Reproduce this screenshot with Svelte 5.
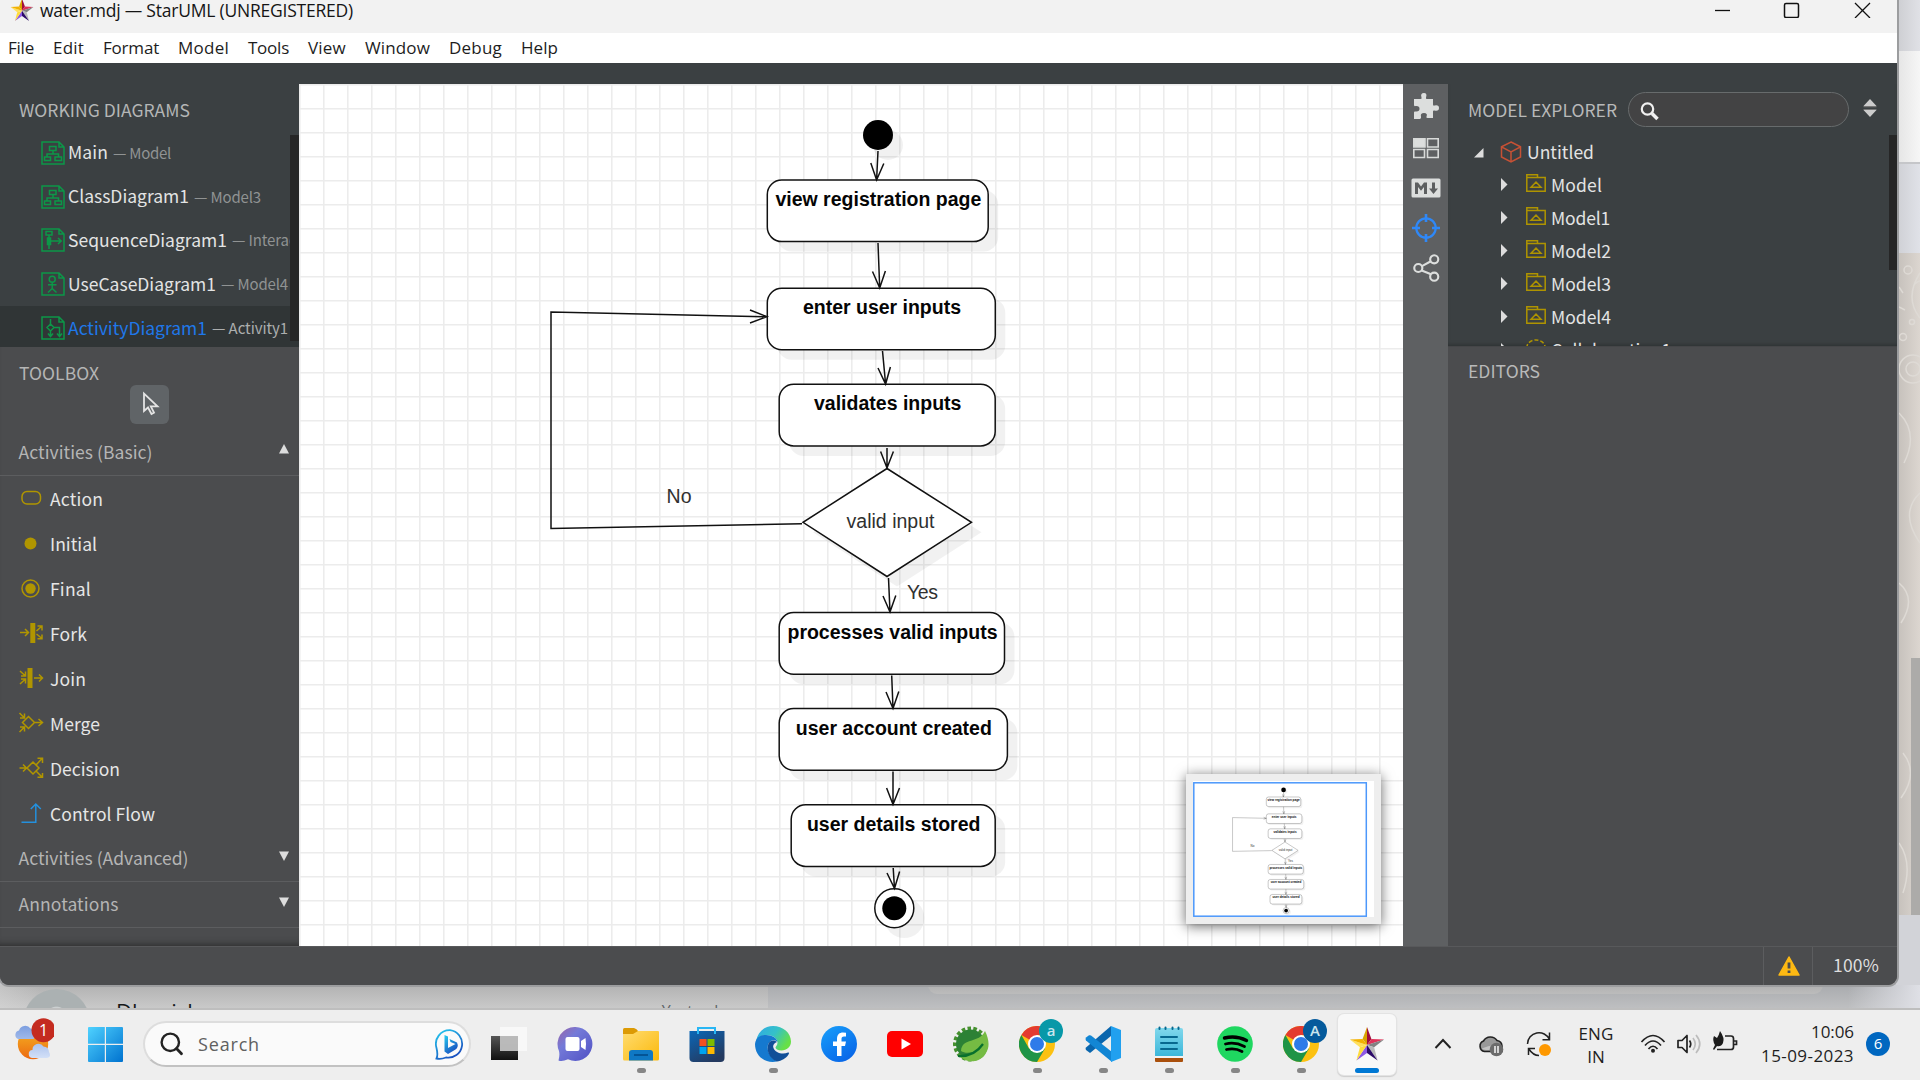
<script>
  // Spreads a label's letters so that it takes up the given width.
  function fit(node, width) {
    if (!width) return;
    const natural = node.getBoundingClientRect().width;
    node.style.letterSpacing = (width - natural) / node.textContent.length + 'px';
  }

  const menus = [
    ['File', 26], ['Edit', 31], ['Format', 56], ['Model', 51], ['Tools', 41],
    ['View', 38], ['Window', 65], ['Debug', 53], ['Help', 37]
  ];

  const diagrams = [
    { name: 'Main', w: 40, parent: '— Model', pw: 58, icon: 'class' },
    { name: 'ClassDiagram1', w: 121, parent: '— Model3', pw: 67, icon: 'class' },
    { name: 'SequenceDiagram1', w: 159, parent: '— Interaction1', pw: 100, icon: 'sequence' },
    { name: 'UseCaseDiagram1', w: 148, parent: '— Model4', pw: 67, icon: 'usecase' },
    { name: 'ActivityDiagram1', w: 139, parent: '— Activity1', pw: 76, icon: 'activity', selected: true }
  ];

  const tools = [
    ['Action', 53], ['Initial', 47], ['Final', 41], ['Fork', 37],
    ['Join', 36], ['Merge', 50], ['Decision', 70], ['Control Flow', 105]
  ];

  const models = [['Model', 51], ['Model1', 59], ['Model2', 60], ['Model3', 60], ['Model4', 60]];

  const actions = [
    { x: 767.3, y: 180, w: 220.9, label: 'view registration page', cx: 878.4, tw: 206 },
    { x: 767.3, y: 288.2, w: 228, label: 'enter user inputs', cx: 882, tw: 158 },
    { x: 779.2, y: 384.3, w: 216, label: 'validates inputs', cx: 887.7, tw: 147.5 },
    { x: 779.2, y: 612.6, w: 225.3, label: 'processes valid inputs', cx: 892.5, tw: 210 },
    { x: 779.2, y: 708.6, w: 228.2, label: 'user account created', cx: 893.8, tw: 196 },
    { x: 791.2, y: 804.8, w: 204, label: 'user details stored', cx: 893.7, tw: 173.5 }
  ];

  const flows = [
    'M878 151L876.6 180M870.8 163L876.6 180L883.8 163.5',
    'M878 243L879.7 288M872.5 271.5L879.7 288L885.4 271',
    'M882.5 351L885.6 384M878 368L885.6 384L890.4 367',
    'M887 448V468M880.6 451.5L887 468L893.4 451.5',
    'M888.5 578L890 612M883 596L890 612L895.8 595.5',
    'M891.7 675.5L893 708.5M886 692L893 708.5L898.8 691.5',
    'M893 771.5V804.5M886.6 788L893 804.5L899.5 788',
    'M893.2 868L894.5 888.5M887 873L894.5 888.5L899.6 871.5',
    'M802 523.8L551 528.5V312L767 316.7M750 310L767 316.7L750 323'
  ];

  const apps = [
    { id: 'taskview' }, { id: 'chat' }, { id: 'explorer', open: true }, { id: 'store' },
    { id: 'edge', open: true }, { id: 'facebook' }, { id: 'youtube' }, { id: 'spring' },
    { id: 'chrome', open: true, badge: 'a', color: '#0798a8' }, { id: 'vscode', open: true },
    { id: 'notepad', open: true }, { id: 'spotify', open: true },
    { id: 'chrome', open: true, badge: 'A', color: '#045a9c' }, { id: 'staruml', active: true }
  ];
</script>

{#snippet star()}
  <svg class="star" viewBox="0 0 36 36">
    <path fill="#d9a400" d="M18 19L18 1L13.6 12.9z" /><path fill="#a00f3d" d="M18 19V1L22.4 12.9z" />
    <path fill="#df3158" d="M18 19L22.4 12.9L35.1 13.4z" /><path fill="#828282" d="M18 19L35.1 13.4L25.1 21.3z" />
    <path fill="#b9b9b9" d="M18 19L25.1 21.3L28.6 34.6z" /><path fill="#2b0a68" d="M18 19L28.6 34.6L18 27z" />
    <path fill="#8d58e4" d="M18 19V27L7.4 34.6z" /><path fill="#ffdc3c" d="M18 19L7.4 34.6L10.9 21.3z" />
    <path fill="#ffe05a" d="M18 19L10.9 21.3L.9 13.4z" /><path fill="#f3b200" d="M18 19L.9 13.4L13.6 12.9z" />
  </svg>
{/snippet}

{#snippet diagramIcon(kind)}
  <svg class="doc" viewBox="0 0 24 24" fill="none" stroke="#0c9748" stroke-width="1.5">
    <path d="M1 1H18L23 6V23H1z M18 1V6H23" />
    {#if kind === 'class'}
      <path d="M8.5 5.5H15V9.5H8.5zM12 9.5V13M6 16V13H17.500V16M3.500 16H9.500V19.500H3.500zM14 16H20.500V19.500H14z" />
    {:else if kind === 'sequence'}
      <path d="M5 3.500H11V7H5zM8 7V21M6.500 10H9.500V16.500H6.500zM9.500 13H20M17 10L20.200 13L17 16" />
    {:else if kind === 'usecase'}
      <circle cx="11.200" cy="7.300" r="3" /><path d="M11.200 10.500V16.500M7 12.800H15.500M7 20.500L11.200 16.500L15.500 20.500" />
    {:else}
      <path d="M9.500 3V8M9.500 8L13 11.500L9.500 15L6 11.500zM9.500 15V20M7 17.500L9.500 20.500L12 17.500M13 11.500H18.500V20M16 17.500L18.500 20.500L21 17.500" />
    {/if}
  </svg>
{/snippet}

{#snippet toolIcon(name)}
  <svg class="tool-icon" viewBox="0 0 28 28" fill="none" stroke="#b09500" stroke-width="1.500">
    {#if name === 'Action'}
      <rect x="4" y="6.500" width="18.500" height="12.500" rx="5" />
    {:else if name === 'Initial'}
      <circle cx="12.500" cy="13.500" r="6" fill="#b09500" stroke="none" />
    {:else if name === 'Final'}
      <circle cx="12.500" cy="13.500" r="8.500" /><circle cx="12.500" cy="13.500" r="5.200" fill="#b09500" stroke="none" />
    {:else if name === 'Fork'}
      <path stroke-width="5" d="M14.800 3V23" />
      <path d="M2 12.500H10M7 9L10.500 12.500L7 16M18.500 11L24 6M19.500 6H24V10.500M18.500 14L24 18.500M19.500 18.800H24V14.500" />
    {:else if name === 'Join'}
      <path stroke-width="5" d="M12 3V23" />
      <path d="M2 6L7.500 11M7.500 6.500V11H3M2 19L7.500 14M7.500 18.500V14H3M16 13H24.500M21 9.500L24.500 13L21 16.500" />
    {:else if name === 'Merge'}
      <path d="M10.500 6.500L16.500 12.500L10.500 18.500L4.500 12.500zM1.500 3L6.500 8M6.500 3.500V8H2M1.500 22L6.500 17M6.500 21.500V17H2M16.500 12.500H24.500M20.500 9L24.500 12.500L20.500 16" />
    {:else if name === 'Decision'}
      <path d="M15 7L21 13L15 19L9 13zM1.500 13H8.500M5 9.500L8.500 13L5 16.500M18.500 9.500L24.500 3M19.500 3.300H24.500V8M18.500 16.500L24.500 22.500M19.500 22.300H24.500V18" />
    {:else}
      <path stroke="#2490dd" d="M3.500 22.300H17.800V4.500M12.800 9L17.800 4L22.800 9" />
    {/if}
  </svg>
{/snippet}

{#snippet flowchart()}
  <g fill="#000" fill-opacity=".055">
    <circle cx="888" cy="145" r="15" />
    {#each actions as a}<rect x={a.x + 10} y={a.y + 10} width={a.w} height="61.600" rx="14.500" />{/each}
    <path d="M897 478L981.500 532.300L897 586.500L813 532.300z" /><circle cx="904.300" cy="918" r="20" />
  </g>
  <g fill="#fff" stroke="#111" stroke-width="1.500">
    {#each actions as a}<rect x={a.x} y={a.y} width={a.w} height="61.600" rx="14.500" />{/each}
    <path d="M887 468.500L971.500 522.300L887 576.500L803 522.300z" />
    <circle cx="894.300" cy="908.300" r="19.500" />
  </g>
  <circle cx="878" cy="135" r="15" /><circle cx="894.300" cy="908.300" r="12" />
  <g fill="none" stroke="#111" stroke-width="1.500">
    {#each flows as d}<path {d} />{/each}
  </g>
  <g class="labels">
    {#each actions as a}
      <text class="strong" x={a.cx} y={a.y + 26} textLength={a.tw}>{a.label}</text>
    {/each}
    <text x="890.500" y="527.700" textLength="88">valid input</text>
    <text x="679" y="503" textLength="25">No</text>
    <text x="922.500" y="599.200" textLength="31">Yes</text>
  </g>
{/snippet}

{#snippet appIcon(id)}
  <svg class="app-icon" viewBox="0 0 36 36">
    {#if id === 'taskview'}
      <path fill="url(#tv)" d="M0 10H27V34H0z" /><path fill="#fff" fill-opacity=".75" d="M9 1H36V25H9z" /><path fill="#b4b4b4" d="M9 10H27V25H9z" opacity=".8" /><path fill="#f8f8f8" d="M9 1H36V10H9zM27 10H36V25H27z" />
    {:else if id === 'chat'}
      <path fill="url(#ch)" d="M18 1a17 17 0 1 1-7 32.300Q5 36 1.500 34.500Q3 29 2 25A17 17 0 0 1 18 1z" />
      <rect x="8.500" y="11" width="14" height="14" rx="2" fill="#fff" /><path fill="#fff" d="M24 15L28.500 12Q29.500 18 28.500 24L24 21z" />
    {:else if id === 'explorer'}
      <path fill="#dc9a04" d="M0 3.500Q0 2 1.500 2H11Q14 3 15 5V12H0z" /><path fill="url(#fo)" d="M0 8H10L15 5H35Q36 5 36 6V33Q36 34.500 34.500 34.500H1.500Q0 34.500 0 33z" />
      <path fill="#0f78c4" d="M6 34.500V27Q6 24 9 24H27Q30 24 30 27V34.500z" /><path stroke="#045496" stroke-width="2" d="M11 29H25" />
    {:else if id === 'store'}
      <path fill="url(#st)" d="M.5 5H35.500V32Q35.500 36 31.500 36H4.500Q.5 36 .5 32z" /><path fill="none" stroke="#28b6f4" stroke-width="2" d="M9 8V2H26V8" />
      <path fill="#f25022" d="M10.500 13H17.500V20H10.500z" /><path fill="#7fba00" d="M18.500 13H25.500V20H18.500z" /><path fill="#00a4ef" d="M10.500 21H17.500V28H10.500z" /><path fill="#ffb900" d="M18.500 21H25.500V28H18.500z" />
    {:else if id === 'edge'}
      <path fill="url(#e1)" d="M1 15C3 5 10 0 18 0C28 0 36 7 36 15.500C36 21 31.500 24.500 26.500 24.500C22.500 24.500 20.500 23 20.500 21.500C20.500 20.500 22.500 19.500 22.500 16.500C22.500 12 17 9 11.500 9C6 9 3 12 1 15z" />
      <path fill="#1579cf" d="M0 18C1 11 6 9 11 9C17 9 22 12 22.500 16C20 13 15.500 14 13.500 17.500C11 23 14 31 22 35.500C10 38 0 30 0 18z" />
      <path fill="#114f98" d="M13.500 17.500C15 14 20 13.500 22 16C19 17 17.500 19.500 18.500 22C20 27 28 29 33 26.500Q35 26 33.500 28.500C31 32.500 26.500 35 22 35.500C14 32.500 11 24 13.500 17.500z" />
    {:else if id === 'facebook'}
      <circle cx="18" cy="18" r="18" fill="url(#fb)" /><path fill="#fff" d="M16 30V20H12V15.500H16V13C16 8.500 18.500 6.500 22 6.500L25 6.800V10.500H23C21 10.500 20.500 11.500 20.500 13V15.500H25L24 20H20.500V30z" />
    {:else if id === 'youtube'}
      <rect y="5" width="36" height="26" rx="5" fill="#f00" /><path fill="#fff" d="M14.500 12.500L24 18L14.500 23.500z" />
    {:else if id === 'spring'}
      <circle cx="17.500" cy="18" r="15.500" fill="none" stroke="#45902e" stroke-width="4" stroke-dasharray="3.500 2.300" /><circle cx="17.500" cy="18" r="14.500" fill="#2c8135" />
      <path fill="#75bb43" d="M32 5C36 13 37 21 33 27C29 35 19 37 12 34L5 30C12 30 20 28 25 24C20 27 12 28 8 25C9 11 26 18 32 5z" /><path fill="none" stroke="#08702d" stroke-width="2.200" d="M5 30Q21 31 30 18" />
    {:else if id === 'chrome'}
      <circle cx="18" cy="18" r="18" fill="#fcc111" /><path fill="#e33b30" d="M18 18L2.400 9A18 18 0 0 1 33.600 9H18z" /><path fill="#1f9447" d="M2.400 9A18 18 0 0 0 18 36L26 22.500L10 22.500z" />
      <circle cx="18" cy="18" r="9" fill="#fff" /><circle cx="18" cy="18" r="7" fill="#2f7be9" />
    {:else if id === 'vscode'}
      <path fill="#0a66ad" d="M26 0V10L5 27L1 24Q0 22.500 1 21.500z" /><path fill="#1286d4" d="M1 14.500Q0 13 1 11.500L4 9.300Q5 9 6 9.500L27 26V36Z" /><path fill="#21a0ef" d="M26 0L36 4V32L26 36z" />
    {:else if id === 'notepad'}
      <path fill="#aa500d" d="M4 31H32V35Q32 36 31 36H5Q4 36 4 35z" /><path fill="#f3f3f3" d="M4 29H32V32H4z" /><path fill="url(#np)" d="M4 4Q4 2 6 2H30Q32 2 32 4V30H4z" />
      <path fill="none" stroke="#07688f" stroke-width="2" stroke-linecap="round" d="M10 11H26M10 17H26M10 23H26M8.500 1.500V3M14.500 1.500V3M21.500 1.500V3M27.500 1.500V3" />
    {:else if id === 'spotify'}
      <circle cx="18" cy="18" r="17.800" fill="#1fd760" /><path fill="none" stroke="#000" stroke-linecap="round" stroke-width="3.400" d="M7.500 12Q19 9 29.500 14.500" /><path fill="none" stroke="#000" stroke-linecap="round" stroke-width="2.800" d="M8.500 18Q18 15.500 27.500 20.500M9.500 23.500Q18 21.500 25 25.500" />
    {:else}
      {@render star()}
    {/if}
  </svg>
{/snippet}

<div class="screen">
  <svg class="defs" width="0" height="0">
    <defs>
      <linearGradient id="tv" x2="0" y2="1"><stop stop-color="#555" /><stop offset="1" stop-color="#111" /></linearGradient>
      <linearGradient id="ch" x2="1" y2="1"><stop stop-color="#9b62a5" /><stop offset=".35" stop-color="#747ad8" /><stop offset="1" stop-color="#4f50c4" /></linearGradient>
      <linearGradient id="fo" x2="1" y2="1"><stop stop-color="#ffdc70" /><stop offset="1" stop-color="#fbb90b" /></linearGradient>
      <linearGradient id="st" x2=".6" y2="1"><stop stop-color="#0b67b7" /><stop offset="1" stop-color="#243a60" /></linearGradient>
      <linearGradient id="e1" x2="1" y2=".5"><stop stop-color="#2fa9e8" /><stop offset=".55" stop-color="#35c1c8" /><stop offset="1" stop-color="#67e046" /></linearGradient>
      <linearGradient id="fb" x2=".7" y2="1"><stop stop-color="#18a0fb" /><stop offset="1" stop-color="#0866e8" /></linearGradient>
      <linearGradient id="np" x2="0" y2="1"><stop stop-color="#82d8ec" /><stop offset="1" stop-color="#3cb7da" /></linearGradient>
      <linearGradient id="wn" x2="1" y2="1"><stop stop-color="#4fd2ff" /><stop offset="1" stop-color="#0072cf" /></linearGradient>
      <linearGradient id="sun" x2="0" y2="1"><stop stop-color="#f5b322" /><stop offset="1" stop-color="#ec6a12" /></linearGradient>
      <linearGradient id="cl" x2="0" y2="1"><stop stop-color="#7c9ee0" /><stop offset="1" stop-color="#d3e0f7" /></linearGradient>
      <linearGradient id="bg" x2=".6" y2="1"><stop stop-color="#25cdf0" /><stop offset="1" stop-color="#1a50c0" /></linearGradient>
    </defs>
  </svg>

  <div class="behind">
    <div class="strip">
      <i class="s1"></i><i class="s2"></i><i class="s3"></i>
      <div class="wallpaper">
        <svg width="21" height="662" fill="none" stroke="#dedad5" stroke-width="1.500">
          <circle cx="9" cy="17" r="4" /><path d="M21 20Q5 45 21 65M16 31Q19 28 21 28M0 34L4 40M0 54L6 57" /><circle cx="13" cy="69" r="2.500" /><circle cx="4" cy="84" r="3.500" /><circle cx="14" cy="116" r="14" /><circle cx="14" cy="116" r="7" /><path d="M0 160Q20 180 5 210M21 240Q0 260 21 290M0 330Q18 345 2 370M4 500Q20 520 2 545M0 590Q14 610 4 640" />
        </svg>
        <i class="scroll"></i>
      </div>
      <i class="s5"></i>
    </div>
    <div class="below">
      <div class="chat-row">
        <span class="avatar"></span>
        <span class="contact">Dhanish</span>
        <span class="when">Yesterday</span>
      </div>
      <div class="chat-main"><i></i></div>
    </div>
  </div>

  <div class="window">
    <header class="title">
      {@render star()}
      <span use:fit={313}>water.mdj — StarUML (UNREGISTERED)</span>
      <svg class="controls" viewBox="0 0 158 18" fill="none" stroke="#111" stroke-width="1.300">
        <path d="M1 10.500H16" /><rect x="70.500" y="3.500" width="14" height="14" rx="1.500" stroke-width="1.500" /><path d="M141 3L156 18M156 3L141 18" />
      </svg>
    </header>
    <nav>{#each menus as [m, w]}<span use:fit={w}>{m}</span>{/each}</nav>
    <div class="spacer"></div>
    <main>
      <aside class="left">
        <section class="working">
          <h2><span use:fit={171}>WORKING DIAGRAMS</span></h2>
          <ul>
            {#each diagrams as d}
              <li class:selected={d.selected}>
                {@render diagramIcon(d.icon)}
                <span class="name" use:fit={d.w}>{d.name}</span>
                <span class="parent" use:fit={d.pw}>{d.parent}</span>
              </li>
            {/each}
          </ul>
          <i class="thumb"></i>
        </section>
        <section class="toolbox">
          <h2><span use:fit={80}>TOOLBOX</span></h2>
          <div class="pointer">
            <svg width="20" height="26" viewBox="0 0 20 26" fill="none" stroke="#e4e4e4" stroke-width="1.800"><path d="M3 2.500V20L7 16.500L10.500 23L13 21.700L9.800 15.300H16.500z" /></svg>
          </div>
          <h3 class="open"><span use:fit={134}>Activities (Basic)</span><svg class="tri" viewBox="0 0 10 10"><path d="M5 0L10 9.500H0z" /></svg></h3>
          {#each tools as [t, w]}
            <div class="tool">{@render toolIcon(t)}<span use:fit={w}>{t}</span></div>
          {/each}
          <h3><span use:fit={170}>Activities (Advanced)</span><svg class="tri" viewBox="0 0 10 10"><path d="M5 10L10 .5H0z" /></svg></h3>
          <h3><span use:fit={100}>Annotations</span><svg class="tri" viewBox="0 0 10 10"><path d="M5 10L10 .5H0z" /></svg></h3>
        </section>
      </aside>

      <div class="canvas">
        <svg class="sheet" viewBox="299 84 1104 862">
          <defs><pattern id="grid" x="299" y="84" width="24" height="24" patternUnits="userSpaceOnUse"><path d="M0 .1H24M.1 0V24" stroke="#ececec" stroke-width="3" /></pattern></defs>
          <rect x="299" y="84" width="1104" height="862" fill="#fff" />
          <rect x="299" y="84" width="1104" height="862" fill="url(#grid)" />
          {@render flowchart()}
        </svg>
        <div class="minimap">
          <svg viewBox="1193 781 181 136">
            <rect x="1193" y="781" width="181" height="136" fill="#fff" />
            <g class="mini" transform="translate(1146.600 768.900) scale(.156)">{@render flowchart()}</g>
            <rect x="1193.800" y="782.800" width="172.500" height="133.400" fill="none" stroke="#4c98fb" stroke-width="1.500" />
          </svg>
        </div>
      </div>

      <div class="toolbar">
        <svg viewBox="0 0 26 26" fill="#dcdedd"><path d="M1 6H7.500Q9 6 8.500 4.500Q7 0 11 0Q14.500 0 13 4.500Q12.500 6 14 6H20V11.500Q20 13 21.500 12.500Q26 11.500 26 15Q26 18.500 21.500 17.500Q20 17 20 18.500V25H14.500Q13 25 13.500 23.500Q15 20 11 20Q7 20 8 23.500Q8.500 25 7 26H1V19.500Q1 18 2.500 18.500Q6.500 19 6.500 15.800Q6.500 12.500 2.500 13Q1 13.500 1 12z" /></svg>
        <svg viewBox="0 0 26 26" fill="none" stroke="#d8dad9" stroke-width="1.600"><path fill="#dcdedd" d="M.8 3.800H12V12H.8z" /><path d="M14.500 3.800H25.200V12H14.500zM.8 14.500H11.500V22.500H.8zM14.500 14.500H25.200V22.500H14.500z" /></svg>
        <svg class="md" viewBox="0 0 30 26"><rect x=".5" y="3.500" width="29" height="19" rx="1.500" fill="#dcdedd" /><path fill="#5d5f60" d="M4 19V7.500H7L10 11.500L13 7.500H16V19H13V12L10 15.800L7 12V19zM21 7.500H24V13.500H27L22.500 19L18 13.500H21z" /></svg>
        <svg class="target" viewBox="0 0 28 28" fill="none" stroke="#2f88f7" stroke-width="2.200"><circle cx="14" cy="14" r="9.700" /><path stroke-width="2.600" d="M14 0V8M14 20V28M0 14H8M20 14H28" /></svg>
        <svg class="share" viewBox="0 0 28 28" fill="none" stroke="#dcdedd" stroke-width="2.200"><circle cx="5.500" cy="14" r="4.200" /><circle cx="22" cy="5" r="4.200" /><circle cx="22" cy="23" r="4.200" /><path d="M9.300 12L18.500 7M9 16.500L18.700 20.500" /></svg>
      </div>

      <aside class="right">
        <section class="explorer">
          <div class="head">
            <span use:fit={149}>MODEL EXPLORER</span>
            <div class="search"><svg width="20" height="20" viewBox="0 0 20 20" fill="none" stroke="#f0f0f0"><circle cx="7.500" cy="8" r="5.700" stroke-width="2.200" /><path stroke-width="3.500" d="M12 12.500L17.500 18" /></svg></div>
            <svg class="sort" viewBox="0 0 14 18" fill="#ccc"><path d="M7 0L13.500 7H.5zM7 18L13.500 11H.5z" /><path fill="#777" d="M.5 7H13.500V8.200H.5zM.5 10H13.500V11H.5z" /></svg>
          </div>
          <div class="tree">
            <div class="node root">
              <svg class="caret" viewBox="0 0 10 10" fill="#ddd"><path d="M9.500 0V9.500H0z" /></svg>
              <svg class="cube" viewBox="0 0 22 22" fill="none" stroke="#c65135" stroke-width="1.500"><path d="M11 1L20.500 5.800V16L11 21L1.500 16V5.800zM1.500 5.800L11 10.800L20.500 5.800M11 10.800V21" /></svg>
              <span use:fit={67}>Untitled</span>
            </div>
            {#each models as [m, w]}
              <div class="node">
                <svg class="caret" viewBox="0 0 10 14" fill="#ddd"><path d="M2 1L8.500 7.500L2 14z" /></svg>
                <svg class="folder" viewBox="0 0 20 18" fill="none" stroke="#af9400" stroke-width="1.500"><path d="M.8 17.200V.8H11.500V3.500H19.200V17.200zM1 3.500H12M5 13.200L10 8L15 13.200z" /></svg>
                <span use:fit={w}>{m}</span>
              </div>
            {/each}
            <div class="node">
              <svg class="caret" viewBox="0 0 10 14" fill="#ddd"><path d="M2 1L8.500 7.500L2 14z" /></svg>
              <svg class="folder" viewBox="0 0 20 18" fill="none" stroke="#af9400" stroke-width="1.500" stroke-dasharray="4 2"><ellipse cx="10" cy="8" rx="9" ry="7" /></svg>
              <span use:fit={120}>Collaboration1</span>
            </div>
          </div>
          <i class="thumb"></i>
        </section>
        <section class="editors"><h2><span use:fit={72}>EDITORS</span></h2></section>
      </aside>
    </main>
    <footer>
      <div class="warn"><svg viewBox="0 0 22 20"><path fill="#fdb913" stroke="#fdb913" stroke-width="1.500" stroke-linejoin="round" d="M11 1L21 19H1z" /><path stroke="#4b4c4e" stroke-width="2.800" d="M11 6.500V12.500M11 14.500V17" /></svg></div>
      <div class="zoom"><span use:fit={46}>100%</span></div>
    </footer>
  </div>

  <div class="taskbar">
    <div class="weather">
      <svg viewBox="0 0 40 46"><circle cx="19" cy="28" r="15.200" fill="url(#sun)" /><path fill="url(#cl)" d="M4 23a4.500 4.500 0 0 1 1-8.500a6.500 6.500 0 0 1 11.500-2a6 6 0 0 1 3 10.500zM19 42a4 4 0 0 1-.5-8a6 6 0 0 1 11-3.500a6 6 0 0 1 5.500 5.500q3 5-2 6z" /><circle cx="29.500" cy="14.300" r="12" fill="#c42b1f" /></svg>
      <b>1</b>
    </div>
    <svg class="start" viewBox="0 0 35 35" fill="url(#wn)"><path d="M0 1Q0 0 1 0H16.800V16.800H0zM18 0H34Q35 0 35 1V16.800H18zM0 18H16.800V35H1Q0 35 0 34zM18 18H35V34Q35 35 34 35H18z" /></svg>
    <div class="searchbar">
      <svg width="24" height="24" viewBox="0 0 24 24" fill="none" stroke="#222"><circle cx="10.300" cy="10.300" r="8.700" stroke-width="2.400" /><path stroke-width="2.800" stroke-linecap="round" d="M16.500 16.500L21.500 21.800" /></svg>
      <span use:fit={62}>Search</span>
      <svg class="bing" viewBox="0 0 30 31" fill="none" stroke="url(#bg)"><path stroke-width="1.800" d="M15 1.200A13.800 13.800 0 1 1 11 28.500Q6 30.500 1.500 29.500Q3.200 26 1.500 19A13.800 13.800 0 0 1 15 1.200z" /><path fill="url(#bg)" stroke="none" d="M9.500 6L13 7.500V19L20.500 15L15.500 13L14.500 10L22 13.500Q24 18 20.500 20.500L13 25L9.500 22.500z" /></svg>
    </div>
    <div class="apps">
      {#each apps as a}
        <div class="slot">
          <div class="tile" class:active={a.active}>
            {@render appIcon(a.id)}
            {#if a.badge}<span class="badge" style:background={a.color}>{a.badge}</span>{/if}
            {#if a.open || a.active}<i class="dot"></i>{/if}
          </div>
        </div>
      {/each}
    </div>
    <div class="tray">
      <svg class="t1" viewBox="0 0 18 12" fill="none" stroke="#222" stroke-width="2"><path d="M1.500 10L9 2L16.500 10" /></svg>
      <svg class="t2" viewBox="0 0 26 24"><path fill="#999" stroke="#222" stroke-width="1.600" d="M6.500 17.500A5.500 5.500 0 0 1 5.500 7A8 8 0 0 1 19 6.500A6 6 0 0 1 24 12V17.500z" /><path fill="#ddd" d="M3 15Q12 10 23 11.500V16H8z" opacity=".6" /><circle cx="18.500" cy="15.500" r="6.800" fill="#6b6b6b" /><path stroke="#fff" stroke-width="1.400" d="M17 12V19M20 12V19" /></svg>
      <svg class="t3" viewBox="0 0 26 26" fill="none" stroke="#222" stroke-width="1.500"><path d="M1.500 13A11.500 11.500 0 0 1 23.500 8.500M23.500 1.500V8.700H16.500M2.500 24V17.500H9M2.500 17.500Q7 24.500 13 24.500" /><circle cx="19" cy="19" r="6" fill="#fe9800" stroke="none" /></svg>
      <div class="lang"><span use:fit={35}>ENG</span><span>IN</span></div>
      <svg class="t4" viewBox="0 0 26 20" fill="none" stroke="#222" stroke-width="1.700"><path d="M1.500 8Q13-5 24.500 8M5 11.500Q13 2.500 21 11.500M8.500 15Q13 9.500 17.500 15" /><circle cx="13" cy="16.800" r="2" fill="#222" stroke="none" /></svg>
      <svg class="t5" viewBox="0 0 26 22" fill="none" stroke="#222" stroke-width="1.700"><path d="M2 7.500H6L11 2.500V19.500L6 14.500H2z" stroke-linejoin="round" /><path d="M13.500 7.500Q16 11 13.500 14.500" /><path stroke="#bcbcbc" d="M17 5Q21.500 11 17 17M20 2Q27.500 11 20 20" /></svg>
      <svg class="t6" viewBox="0 0 26 22" fill="none" stroke="#222" stroke-width="1.700"><path d="M13 5H19Q21.500 5 21.500 7.500V16Q21.500 18.500 19 18.500H5M22 10H24.500V13.500H22" /><path fill="#1c1c1c" stroke="none" d="M8 0Q13 7 11 12Q9 16 5 15L2 19L1 18L3 14Q0 9 2 5L5 7Q7 4 8 0z" /></svg>
      <div class="clock"><span use:fit={43}>10:06</span><span use:fit={93}>15-09-2023</span></div>
      <b class="count">6</b>
    </div>
  </div>
</div>

<style>
  :global(body) { margin: 0; overflow: hidden; }
  .screen { position: relative; width: 1920px; height: 1080px; overflow: hidden; background: #c4c5c8; font-family: "Noto Sans CJK SC", "Noto Sans", sans-serif; font-size: 17.5px; line-height: 24px; }
  .screen :global(*) { box-sizing: border-box; }
  svg { display: block; flex: none; }
  span { display: inline-block; white-space: nowrap; flex: none; }
  h2, h3, ul { margin: 0; padding: 0; font-weight: 400; font-size: 17.5px; list-style: none; }
  .defs { position: absolute; }

  /* Whatever shows around the application window */
  .behind { position: absolute; inset: 0; display: flex; flex-direction: column; }
  .strip { width: 24px; height: 985px; margin-left: 1896px; display: flex; flex-direction: column; }
  .strip i { display: block; }
  .s1 { height: 51px; background: linear-gradient(90deg, #cccdd1, #e0e1e6); }
  .s2 { height: 111px; background: linear-gradient(90deg, #e4e4e4, #f6f6f6); }
  .s3 { height: 91px; border-top: 2px solid #c5c6c9; background: linear-gradient(90deg, #cecfd4, #e0e2e8); }
  .wallpaper { height: 662px; padding-left: 3px; position: relative; background: linear-gradient(90deg, #c4bfba, #dcd6d0); }
  .scroll { position: absolute; right: 0; bottom: 0; width: 9px; height: 257px; background: #acaba9; }
  .s5 { flex: 1; background: #d2d3d8; }
  .below { height: 23px; display: flex; }
  .chat-row { width: 768px; overflow: hidden; display: flex; align-items: flex-start; background: linear-gradient(90deg, #ddd6, #ccc0 40px), linear-gradient(#b2b2b2, #c9c9c9); }
  .avatar { width: 67px; height: 67px; margin: 4px 0 0 23px; border-radius: 50%; background: radial-gradient(circle at 50% 42%, #ccd0d1 10px, #abb1b2 11px); }
  .contact { margin: 11px 0 0 26px; font: 22px/30px "Open Sans", sans-serif; color: #16191a; }
  .when { margin: 14px 0 0 461px; font: 16px/24px "Open Sans", sans-serif; color: #5e6568; }
  .chat-main { flex: 1; padding-left: 160px; background: linear-gradient(90deg, #ccc0 1080px, #dfe0e6 1152px), linear-gradient(#a9abae, #bebfc1); }
  .chat-main i { display: block; width: 895px; height: 9px; border-radius: 0 0 9px 9px; background: linear-gradient(#b0b0b0, #bcbcbc); }

  .window { position: absolute; left: 0; top: 0; width: 1897px; height: 985px; display: flex; flex-direction: column; overflow: hidden; border-radius: 0 0 9px 9px; background: #4b4c4e; box-shadow: 0 0 0 2px #9c9d9f; }
  .title { height: 33px; display: flex; background: #f2f2f2; padding-left: 10px; font: 17.500px/20px "Open Sans", sans-serif; color: #151515; }
  .title .star { width: 24px; height: 24px; margin: -2px 6px 0 0; }
  .controls { width: 158px; height: 18px; margin-left: auto; margin-right: 25px; }
  nav { height: 30px; display: flex; gap: 19px; padding-left: 8px; background: #fff; font: 17px/29px "Open Sans", sans-serif; color: #1d1d1d; }
  .spacer { height: 21px; background: #3b4042; }
  main { height: 862px; display: flex; }

  .left { width: 299px; display: flex; flex-direction: column; }
  .working { position: relative; height: 263px; background: #3b4042; overflow: hidden; color: #b4b6b6; }
  .working h2 { height: 47px; padding: 14px 0 0 19px; }
  .working li { height: 43.800px; display: flex; align-items: center; padding-left: 41px; color: #e3e4e4; }
  .working li.selected { background: #303536; }
  .doc { width: 24px; height: 24px; margin-right: 3px; }
  .name { margin: -1px 5px 0 0; line-height: 26px; }
  .selected .name { color: #1f78ea; }
  .parent { font-size: 15px; line-height: 24px; color: #909393; }
  .selected .parent { color: #acaeae; }
  .thumb { position: absolute; right: 0; top: 51px; background: #262626; }
  .working .thumb { width: 9px; height: 206px; }
  .toolbox { height: 599px; display: flex; flex-direction: column; background: #4b4c4e; color: #b5b5b5; box-shadow: inset 0 -8px 8px -8px #222; }
  .toolbox h2 { height: 38px; padding: 14px 0 0 19px; }
  .pointer { width: 39px; height: 39px; margin-left: 130px; padding: 6px 0 0 11px; border-radius: 6px; background: #606467; }
  h3 { height: 46px; display: flex; justify-content: space-between; padding: 10px 10px 0 18.500px; border-bottom: 1px solid #5c5d5f; }
  h3.open { height: 52px; padding-top: 16px; }
  .tri { width: 10px; height: 10px; margin-top: 5px; fill: #ddd; }
  .open .tri { margin-top: 4px; }
  .tool { height: 45px; display: flex; align-items: center; padding-left: 18px; color: #e6e6e6; }
  .tool-icon { width: 28px; height: 28px; margin-right: 4px; }

  .canvas { position: relative; width: 1104px; }
  .sheet { width: 1104px; height: 862px; }
  .labels { font: 19.500px "Liberation Sans", sans-serif; text-anchor: middle; fill: #303030; }
  .strong { font-weight: 700; fill: #050505; }
  .minimap { position: absolute; left: 887px; top: 690px; width: 195px; height: 150px; padding: 7px; background: #eee; box-shadow: 0 2px 12px #0009; }
  .minimap svg { width: 181px; height: 136px; }

  .toolbar { width: 45px; display: flex; flex-direction: column; align-items: center; background: #5e6062; padding: 9px 0 0 1px; gap: 16px; }
  .toolbar svg { width: 26px; height: 26px; }
  .toolbar .md { width: 30px; margin: -2px 0 1px -1px; }
  .toolbar .target { width: 28px; height: 28px; margin-top: -4px; }
  .toolbar .share { width: 27px; height: 28px; margin-top: -4px; }

  .right { flex: 1; display: flex; flex-direction: column; color: #b8b9b9; }
  .explorer { position: relative; height: 262px; overflow: hidden; background: #3b4042; box-shadow: inset 0 -3px 4px -2px #0004; }
  .head { height: 51px; display: flex; align-items: flex-start; padding: 8px 19px 0 20px; }
  .head > span { margin: 6px 11px 0 0; }
  .search { width: 221px; height: 35px; padding: 8px 0 0 11px; border: 1px solid #676b6c; border-radius: 18px; background: #434344; }
  .sort { width: 14px; height: 18px; margin: 7px 0 0 14px; }
  .tree { color: #e3e4e4; }
  .node { height: 33px; display: flex; align-items: center; padding-left: 51px; }
  .node.root { padding-left: 26px; }
  .caret { width: 10px; height: 14px; margin: -2px 17px 0 0; }
  .root .caret { height: 10px; margin-top: 2px; }
  .cube { width: 22px; height: 22px; margin: 0 5px 0 -1px; }
  .folder { width: 20px; height: 18px; margin: -4px 5px 0 0; }
  .explorer .thumb { width: 8px; height: 135px; }
  .editors { flex: 1; padding: 12px 0 0 20px; background: #4b4c4e; border-top: 1px solid #454648; }

  footer { height: 39px; display: flex; justify-content: flex-end; background: #4b4c4e; border-top: 1px solid #58595b; color: #dedede; }
  .warn { width: 49px; padding: 9px 0 0 14px; border-left: 1px solid #5c5d5f; }
  .warn svg { width: 22px; height: 20px; }
  .zoom { width: 85px; padding: 6px 0 0 20px; border-left: 1px solid #5c5d5f; }

  .taskbar { position: absolute; left: 0; top: 1008px; width: 1920px; height: 72px; display: flex; background: #eee; border-top: 2px solid #bebebe; font-family: "Open Sans", "Noto Sans", sans-serif; color: #1e1e1e; }
  .weather { position: relative; width: 40px; margin-left: 14px; padding-top: 6px; }
  .weather svg { width: 40px; height: 46px; }
  .weather b { position: absolute; left: 25px; top: 8px; color: #fff; font-size: 16px; font-weight: 400; }
  .start { width: 35px; height: 35px; margin: 17px 20px 0 34px; }
  .searchbar { width: 328px; height: 46px; margin: 11px 5px 0 0; padding: 0 7px 0 15px; display: flex; align-items: center; border: 2px solid #ddd; border-bottom-color: #c2c2c2; border-radius: 23px; background: #fafafa; color: #606060; font-size: 18px; }
  .searchbar span { margin-left: 14px; }
  .bing { width: 30px; height: 31px; margin-left: auto; margin-right: -3px; }
  .apps { display: flex; }
  .slot { width: 66px; display: flex; justify-content: center; padding-top: 4px; }
  .tile { position: relative; width: 58px; height: 61px; padding: 12px 11px 0; border-radius: 6px; }
  .tile.active { background: #f8f8f8; box-shadow: 0 0 0 1px #e3e3e3, 0 1px 1px 1px #ccc; }
  .app-icon { width: 36px; height: 36px; }
  .badge { position: absolute; left: 31px; top: 5px; width: 24px; height: 24px; border-radius: 50%; color: #c9e6ee; font: 600 15px/23px "Open Sans", sans-serif; text-align: center; }
  .dot { position: absolute; left: 25px; bottom: 2px; width: 9px; height: 5px; border-radius: 3px; background: #868686; }
  .active .dot { left: 17px; width: 24px; background: #0078d4; }
  .tray { flex: 1; display: flex; align-items: flex-start; padding-left: 34px; font-size: 17px; line-height: 23px; }
  .t1 { width: 18px; height: 12px; margin-top: 28px; }
  .t2 { width: 26px; height: 24px; margin: 24px 0 0 26px; }
  .t3 { width: 26px; height: 26px; margin: 21px 0 0 22px; }
  .lang { width: 36px; margin: 12px 0 0 26px; display: flex; flex-direction: column; align-items: center; }
  .t4 { width: 26px; height: 20px; margin: 24px 0 0 26px; }
  .t5 { width: 26px; height: 22px; margin: 23px 0 0 10px; }
  .t6 { width: 26px; height: 22px; margin: 21px 0 0 10px; }
  .clock { width: 94px; margin: 10px 0 0 22px; display: flex; flex-direction: column; align-items: flex-end; line-height: 23.500px; }
  .count { width: 24px; height: 24px; margin: 22px 0 0 12px; border-radius: 50%; background: #0067c0; color: #fff; font: 400 15px/23px "Open Sans", sans-serif; text-align: center; }
</style>
